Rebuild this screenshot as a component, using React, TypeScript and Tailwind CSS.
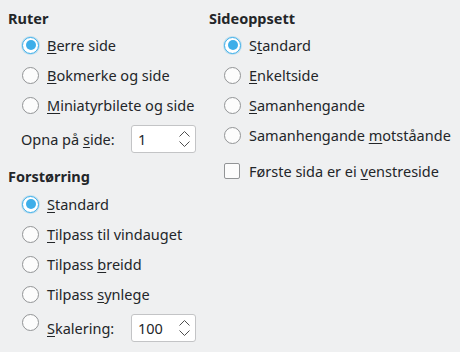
import React from "react";

const M = ({ children }: { children: React.ReactNode }) => (
  <span className="underline decoration-1 underline-offset-[2px]">{children}</span>
);

const Radio = ({ checked }: { checked?: boolean }) =>
  checked ? (
    <div className="w-[17px] h-[17px] shrink-0 rounded-full border-[1.5px] border-[#3daee9] bg-white flex items-center justify-center shadow-[0_0_0_1px_rgba(61,174,233,0.25)]">
      <div className="w-[10px] h-[10px] rounded-full bg-[#3daee9]" />
    </div>
  ) : (
    <div className="w-[17px] h-[17px] shrink-0 rounded-full border border-[#929496] bg-[#fcfcfc]" />
  );

const Spin = ({ value }: { value: string }) => (
  <div className="w-[65px] h-[28px] shrink-0 rounded-[3px] border border-[#c3c4c6] bg-white flex items-center pl-[6px] pr-[5px]">
    <span className="flex-1">{value}</span>
    <svg width="11" height="18" viewBox="0 0 11 18" fill="none" stroke="#4d4d4d" strokeWidth="1">
      <polyline points="0.5,6.5 5.5,1.5 10.5,6.5" />
      <polyline points="0.5,11.5 5.5,16.5 10.5,11.5" />
    </svg>
  </div>
);

const RadioRow = ({ checked, children, ml }: { checked?: boolean; children: React.ReactNode; ml: string }) => (
  <div className="h-[30px] flex items-center">
    <div className={ml}>
      <Radio checked={checked} />
    </div>
    <span className="ml-[8px] whitespace-nowrap">{children}</span>
  </div>
);

export default function App() {
  return (
    <div className="w-[460px] h-[352px] bg-[#eff0f1] flex font-['Noto_Sans',sans-serif] text-[14.5px] text-[#232629] leading-[20px]">
      <div className="w-[209px] pl-[8px] pt-[8px] flex flex-col">
        <div className="h-[20px] font-bold">Ruter</div>
        <div className="mt-[2px] flex flex-col">
          <RadioRow checked ml="ml-[14px]"><M>B</M>erre side</RadioRow>
          <RadioRow ml="ml-[14px]"><M>B</M>okmerke og side</RadioRow>
          <RadioRow ml="ml-[14px]"><M>M</M>iniatyrbilete og side</RadioRow>
        </div>
        <div className="mt-[5px] h-[28px] flex items-center">
          <span className="ml-[13px] w-[110px] whitespace-nowrap">Opna på <M>s</M>ide:</span>
          <Spin value="1" />
        </div>
        <div className="mt-[13px] h-[20px] font-bold">Forstørring</div>
        <div className="mt-[3px] flex flex-col">
          <RadioRow checked ml="ml-[14px]"><M>S</M>tandard</RadioRow>
          <RadioRow ml="ml-[14px]"><M>T</M>ilpass til vindauget</RadioRow>
          <RadioRow ml="ml-[14px]">Tilpass <M>b</M>reidd</RadioRow>
          <RadioRow ml="ml-[14px]">Tilpass <M>s</M>ynlege</RadioRow>
        </div>
        <div className="mt-[5px] h-[28px] flex items-start">
          <div className="ml-[14px]">
            <Radio />
          </div>
          <span className="ml-[8px] w-[84px] h-[28px] flex items-center whitespace-nowrap"><span><M>S</M>kalering:</span></span>
          <Spin value="100" />
        </div>
      </div>
      <div className="flex-1 pt-[8px] flex flex-col">
        <div className="h-[20px] font-bold">Sideoppsett</div>
        <div className="mt-[2px] flex flex-col">
          <RadioRow checked ml="ml-[15px]">S<M>t</M>andard</RadioRow>
          <RadioRow ml="ml-[15px]"><M>E</M>nkeltside</RadioRow>
          <RadioRow ml="ml-[15px]"><M>S</M>amanhengande</RadioRow>
          <RadioRow ml="ml-[15px]">Samanhengande <M>m</M>otståande</RadioRow>
        </div>
        <div className="mt-[6px] h-[30px] flex items-center">
          <div className="ml-[15px] w-[16px] h-[16px] shrink-0 rounded-[2px] border border-[#929496] bg-[#fcfcfc]" />
          <span className="ml-[9px] whitespace-nowrap">Første sida er ei <M>v</M>enstreside</span>
        </div>
      </div>
    </div>
  );
}
